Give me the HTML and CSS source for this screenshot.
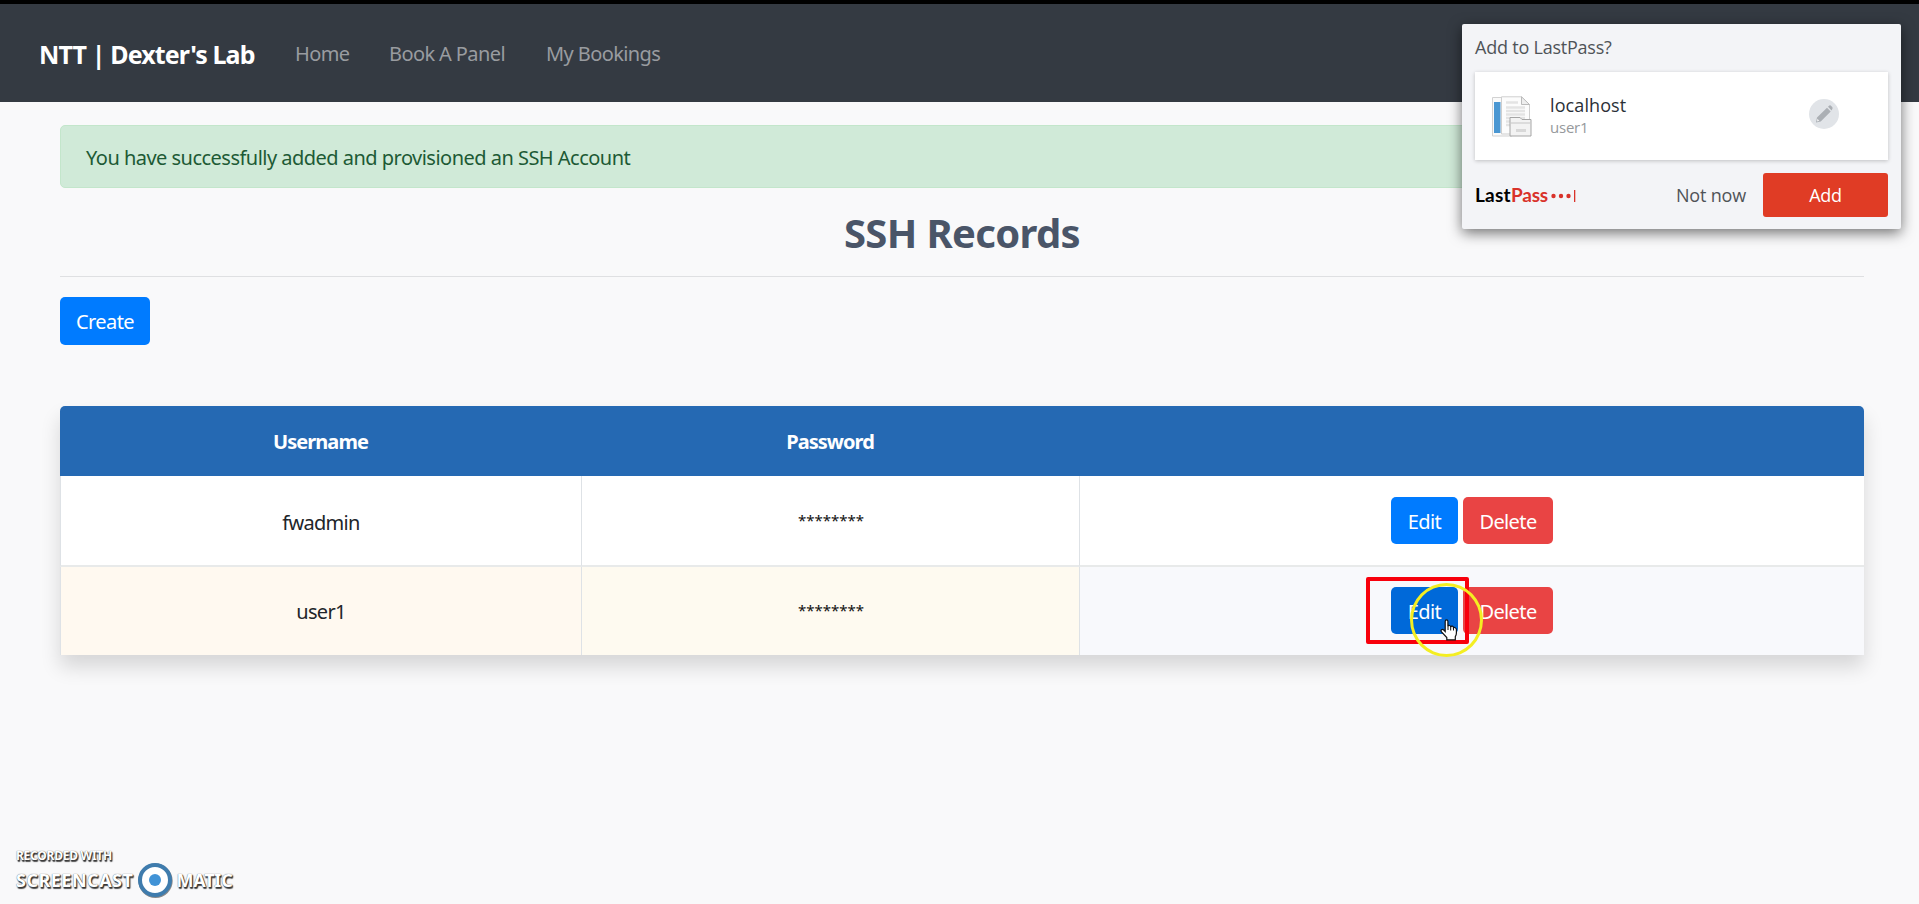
FILE: index.html
```html
<!DOCTYPE html>
<html lang="en">
<head>
<meta charset="utf-8">
<title>SSH Records</title>
<link rel="stylesheet" href="styles.css">
</head>
<body>
<nav class="navbar">
  <a class="brand">NTT | Dexter's Lab</a>
  <a class="nav-link home">Home</a>
  <a class="nav-link book">Book A Panel</a>
  <a class="nav-link mine">My Bookings</a>
</nav>
<main class="content">
  <div class="alert">You have successfully added and provisioned an SSH Account</div>
  <h1 class="title">SSH Records</h1>
  <button class="btn primary create">Create</button>
  <div class="records">
    <div class="row head"><div>Username</div><div>Password</div><div></div></div>
    <div class="row"><div>fwadmin</div><div class="stars">********</div><div class="actions"><button class="btn primary edit">Edit</button><button class="btn danger">Delete</button></div></div>
    <div class="row warm"><div>user1</div><div class="stars">********</div><div class="actions"><button class="btn primary edit hover">Edit</button><button class="btn danger">Delete</button></div></div>
  </div>
</main>
<aside class="popup">
  <div class="popup-title">Add to LastPass?</div>
  <div class="site">
    <svg class="site-icon" width="42" height="42" viewBox="0 0 42 42">
      <path d="M1.500 1.500H21V40H1.500z" fill="#fafafa" stroke="#d2d2d2"/>
      <path d="M3 6H9.500V37H3z" fill="#4a97d2"/>
      <path d="M10.500 .8H30.500L38.500 8.500V38H10.500z" fill="#fcfcfc" stroke="#cfcfcf"/>
      <path d="M30.500 .8V8.500H38.500z" fill="#eee" stroke="#bbb"/>
      <path d="M15 6.500H27M15 11.500H34M15 15H34M15 18.500H34M15 22H34M15 25.500H20M15 29H20" stroke="#e4e4e4" stroke-width="2.400"/>
      <path d="M19 40V21.500H29L31 23.500H40V40z" fill="#f3f3f3" stroke="#a5a5a5"/>
      <path d="M19.500 27H39.500" stroke="#c5c5c5"/><path d="M25 34.500H35" stroke="#d8d8d8" stroke-width="3"/>
    </svg>
    <div class="site-text"><div class="site-name">localhost</div><div class="site-user">user1</div></div>
    <svg class="pencil" width="30" height="30" viewBox="0 0 30 30"><circle cx="15" cy="15" r="15" fill="#e1e4e8"/><path d="M7 23.500L8 18.500L18 8.800L21.700 12.500L11.700 22.500zM19 7.800L20.300 6.600Q21.300 6 22.200 6.900L23.200 7.900Q24 8.900 23.300 9.900L22.600 11.400z" fill="#abafb4"/><path d="M8.400 19.800L10.300 21.800L8 22.400z" fill="#f4f4f4"/></svg>
  </div>
  <div class="popup-foot">
    <div class="lp-logo"><span class="last">Last</span><span class="pass">Pass</span><svg width="28" height="14" viewBox="0 0 28 14"><g fill="#d9322a"><circle cx="5.500" cy="8" r="2.200"/><circle cx="13" cy="8" r="2.200"/><circle cx="20.500" cy="8" r="2.200"/><path d="M26 2h1.300v12h-1.300z"/></g></svg></div>
    <span class="not-now">Not now</span>
    <button class="add">Add</button>
  </div>
</aside>
<div class="highlight"></div>
<div class="ring"></div>
<svg class="cursor" width="18" height="22" viewBox="0 0 18 22"><path d="M5.200 12.500V2.300Q5.300 .8 6.500 .8Q7.800 .8 7.900 2.300V7.500Q8.200 6.300 9.400 6.500Q10.700 6.700 10.700 8Q11.200 7 12.300 7.200Q13.500 7.500 13.500 8.800Q14.200 8.200 15.200 8.700Q16.400 9.200 16.400 10.500V14Q16.400 16 15.300 17.600V20.800H6.800V18.600L1.500 12.800Q.6 11.600 1.500 10.700Q2.700 9.900 3.800 11z" fill="#fff" stroke="#111" stroke-width="1.200"/><path d="M8 7.500V11M10.700 8V11.500M13.500 9V11.500" stroke="#111" fill="none"/></svg>
<div class="watermark">
  <div class="wm-small">RECORDED WITH</div>
  <div class="wm-big"><span class="wm-left">SCREENCAST</span><svg width="36" height="36" viewBox="0 0 36 36"><circle cx="18.500" cy="18.800" r="15.200" fill="none" stroke="#888" stroke-width="4"/><circle cx="18" cy="18" r="15" fill="#fff" stroke="#3f7cad" stroke-width="4"/><circle cx="18" cy="18" r="6" fill="#4193d6"/></svg><span class="wm-right">MATIC</span></div>
</div>
</body>
</html>
```
FILE: styles.css
```css
* { box-sizing: border-box; }
body { margin: 0; width: 1919px; height: 904px; overflow: hidden; position: relative; background: #f9f9fa; color: #212529; font: 20px/30px "Noto Sans", "Open Sans", sans-serif; letter-spacing: -.7px; }
button { font: inherit; letter-spacing: inherit; border: 0; padding: 0; }
.navbar { height: 102px; border-top: 4px solid #000; background: #343a42; display: flex; align-items: center; padding: 1px 0 0 39px; white-space: nowrap; }
.brand { width: 256px; font-size: 25px; font-weight: 700; color: #fff; letter-spacing: -.87px; }
.nav-link { color: #999ca0; letter-spacing: -.6px; }
.home { width: 94px; }
.book { width: 157px; }
.content { padding: 23px 55px 0 60px; }
.alert { height: 63px; border: 1px solid #c3e6cb; border-radius: 5px; background: #d0ead8; color: #1d5a35; padding: 17px 25px; letter-spacing: -.52px; }
.title { margin: 0; height: 89px; padding-top: 20px; border-bottom: 1px solid #dfe0e2; text-align: center; font-size: 40px; line-height: 50px; color: #4a5568; letter-spacing: -.65px; }
.btn { display: block; border-radius: 5px; height: 47px; color: #fff; padding: 3px 0 0; letter-spacing: -.6px; }
.primary { background: #007bff; }
.danger { background: #e94444; }
.create { width: 90px; height: 48px; margin-top: 20px; padding-top: 2px; }
.records { margin-top: 61px; border-radius: 5px 5px 0 0; box-shadow: 0 12px 20px rgba(0,0,0,.14); }
.row { display: grid; grid-template-columns: 521px 498px 785px; height: 91px; background: #fff; }
.row > div { display: flex; align-items: center; justify-content: center; padding-top: 4px; border-left: 1px solid #dee2e6; border-bottom: 2px solid #e8eaea; }
.row.head { height: 70px; background: #2569b3; color: #fff; font-weight: 700; border-radius: 5px 5px 0 0; letter-spacing: -.95px; }
.row.head > div { border: 0; padding-top: 2px; }
.row.warm { height: 88px; background: #f8f9fc; }
.row.warm > div { border-bottom: 0; padding-top: 2px; }
.warm > div:not(.actions) { background: #fff9f0; }
.warm > div.stars { background: #fefaf0; }
.row .stars { font-size: 15px; letter-spacing: 0; color: #111; padding: 0 0 1px 1px; }
.row.warm > div.stars { padding: 0 0 3px 1px; }
.row .actions { gap: 5px; padding-top: 0; }
.row.warm > div.actions { padding: 0 0 2px; }
.edit { width: 67px; }
.hover { background: #0069d9; }
.actions .danger { width: 90px; }
.popup { position: absolute; left: 1462px; top: 24px; width: 439px; height: 205px; padding: 0 13px; border-radius: 2px; background: #f3f4f7; box-shadow: 0 4px 14px rgba(0,0,0,.55); font-family: "Open Sans", sans-serif; font-size: 18px; color: #4f5357; letter-spacing: -.22px; }
.popup-title { height: 48px; padding-top: 8px; }
.site { height: 88px; background: #fff; box-shadow: 0 1px 4px rgba(0,0,0,.22); display: flex; align-items: center; padding: 0 49px 0 16px; }
.site-icon { margin-top: 1px; }
.site-text { margin: -2px 0 0 17px; flex: 1; }
.site-name { font-size: 18px; line-height: 24px; color: #2b3037; font-weight: 500; letter-spacing: .1px; }
.site-user { font-size: 15px; line-height: 20px; color: #96999c; }
.pencil { margin-bottom: 4px; }
.popup-foot { display: flex; align-items: center; margin-top: 13px; height: 44px; }
.lp-logo { display: flex; align-items: center; width: 201px; font-family: Lato, sans-serif; font-size: 19px; font-weight: 700; }
.last { color: #000; letter-spacing: .25px; }
.pass { color: #d9322a; letter-spacing: -.2px; }
.not-now { width: 87px; letter-spacing: -.2px; }
.add { width: 125px; height: 44px; border-radius: 3px; background: #e03c25; color: #fff; font-weight: 500; }
.highlight { position: absolute; left: 1366px; top: 577px; width: 103px; height: 67px; border: 4px solid #f8000c; border-radius: 2px; }
.ring { position: absolute; left: 1410px; top: 583px; width: 73px; height: 74px; border: 3px solid #f4ee22; border-radius: 50%; }
.cursor { position: absolute; left: 1440px; top: 619px; }
.watermark { position: absolute; left: 16px; top: 848px; color: #fff; font-weight: 700; text-shadow: 0 0 1px #444, 1px 1px 1px #333, 1px 2px 1px #555; white-space: nowrap; }
.wm-small { font-size: 12px; line-height: 16px; letter-spacing: -.25px; }
.wm-big { display: flex; align-items: center; font-size: 18px; height: 32px; }
.wm-left { letter-spacing: .5px; }
.wm-right { letter-spacing: -.2px; }
.wm-big svg { margin: 0 3px 0 4px; }
```
